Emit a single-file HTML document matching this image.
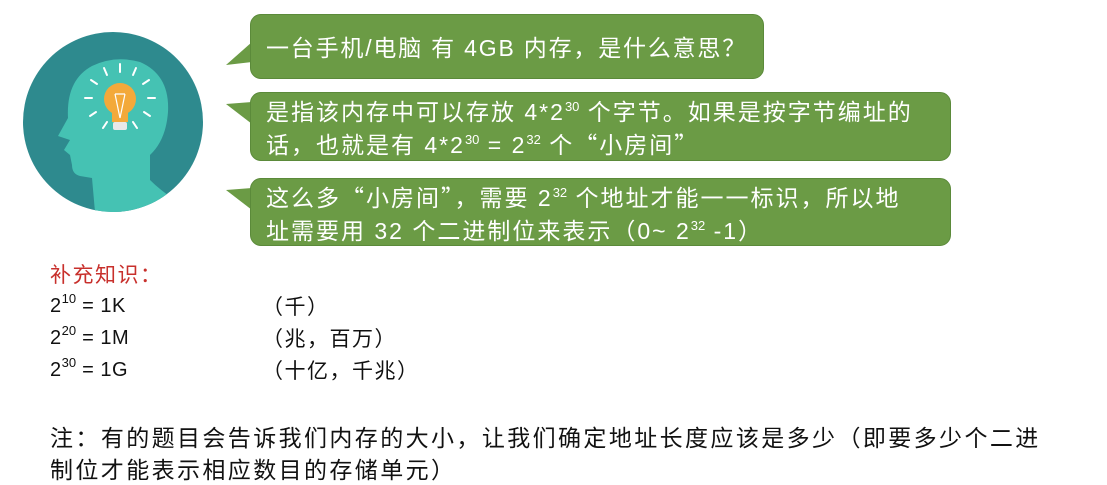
<!DOCTYPE html>
<html><head><meta charset="utf-8"><style>
body{margin:0;width:1107px;height:484px;background:#fff;position:relative;overflow:hidden;font-family:"Liberation Sans","Noto Sans CJK SC",sans-serif}
.b{position:absolute;background:#6b9b45;border:1px solid #5b8a3a;border-radius:11px;color:#fff;font-size:23px;letter-spacing:2px;line-height:31px;padding:0 0 0 15px;box-sizing:border-box;white-space:nowrap}
sup{font-size:13px;vertical-align:9px;line-height:0;letter-spacing:0}
.q{font-family:"Noto Sans CJK SC",sans-serif}
.k{position:absolute;font-size:21px;letter-spacing:1.5px;color:#111;line-height:32px;white-space:nowrap}
</style></head><body>
<svg width="1107" height="484" style="position:absolute;left:0;top:0">
<circle cx="113" cy="122" r="90" fill="#2e8a8e"/>
<clipPath id="c"><circle cx="113" cy="122" r="90"/></clipPath>
<path clip-path="url(#c)" fill="#45c2b3" d="M95 212 L92 178 L80 176 Q72 174 72 165 L70 155 L64 150 L70 140 L58 136 L68 118 Q66 80 92 66 Q115 55 140 62 Q170 75 168 112 Q166 140 150 155 L150 180 Q160 190 175 200 L175 215 Z"/>
<circle cx="120" cy="99" r="16" fill="#f3a93a"/>
<rect x="112" y="112" width="16" height="10" fill="#f3a93a"/>
<path d="M115 94 L120 118 M125 94 L120 118 M115 94 L125 94" stroke="#fff" stroke-width="1.2" fill="none"/>
<rect x="113" y="122" width="14" height="8" rx="2" fill="#e8e8e8"/>
<g stroke="#fff" stroke-width="2" stroke-linecap="round">
<line x1="120" y1="64" x2="120" y2="72"/><line x1="104" y1="68" x2="107" y2="75"/><line x1="136" y1="68" x2="133" y2="75"/>
<line x1="91" y1="80" x2="97" y2="84"/><line x1="149" y1="80" x2="143" y2="84"/>
<line x1="85" y1="98" x2="92" y2="98"/><line x1="148" y1="98" x2="155" y2="98"/>
<line x1="90" y1="116" x2="96" y2="112"/><line x1="150" y1="116" x2="144" y2="112"/>
<line x1="103" y1="128" x2="107" y2="122"/><line x1="137" y1="128" x2="133" y2="122"/>
</g>
<g fill="#6b9b45">
<polygon points="226,65 252,42 252,62"/>
<polygon points="226,104 252,102 252,124"/>
<polygon points="226,190 252,188 252,210"/>
</g>
</svg>
<div class="b" style="left:250px;top:14px;width:514px;height:65px;padding-top:16px;letter-spacing:1.8px">一台手机/电脑 有 4GB 内存<span class="q">，</span>是什么意思<span class="q">？</span></div>
<div class="b" style="left:250px;top:92px;width:701px;height:69px;padding-top:2px">是指该内存中可以存放 4*2<sup>30</sup> 个字节<span class="q">。</span>如果是按字节编址的<br>话<span class="q">，</span>也就是有 4*2<sup>30</sup> = 2<sup>32</sup> 个<span class="q">“</span>小房间<span class="q">”</span></div>
<div class="b" style="left:250px;top:178px;width:701px;height:68px;padding-top:2px">这么多<span class="q">“</span>小房间<span class="q">”，</span>需要 2<sup>32</sup> 个地址才能一一标识<span class="q">，</span>所以地<br>址需要用 32 个二进制位来表示<span class="q">（</span>0~ 2<sup>32</sup> -1<span class="q">）</span></div>
<div class="k" style="left:50px;top:258px;color:#c8302c">补充知识<span class="q">：</span></div>
<div class="k" style="left:50px;top:290px;letter-spacing:0.5px;font-size:20px">2<sup>10</sup> = 1K</div>
<div class="k" style="left:50px;top:322px;letter-spacing:0.5px;font-size:20px">2<sup>20</sup> = 1M</div>
<div class="k" style="left:50px;top:354px;letter-spacing:0.5px;font-size:20px">2<sup>30</sup> = 1G</div>
<div class="k q" style="left:262px;top:290px">（千）</div>
<div class="k q" style="left:262px;top:322px">（兆，百万）</div>
<div class="k q" style="left:262px;top:354px">（十亿，千兆）</div>
<div class="k" style="left:50px;top:421px;line-height:30px;font-size:23px;letter-spacing:2.4px">注<span class="q">：</span>有的题目会告诉我们内存的大小<span class="q">，</span>让我们确定地址长度应该是多少<span class="q">（</span>即要多少个二进<br>制位才能表示相应数目的存储单元<span class="q">）</span></div>
</body></html>
